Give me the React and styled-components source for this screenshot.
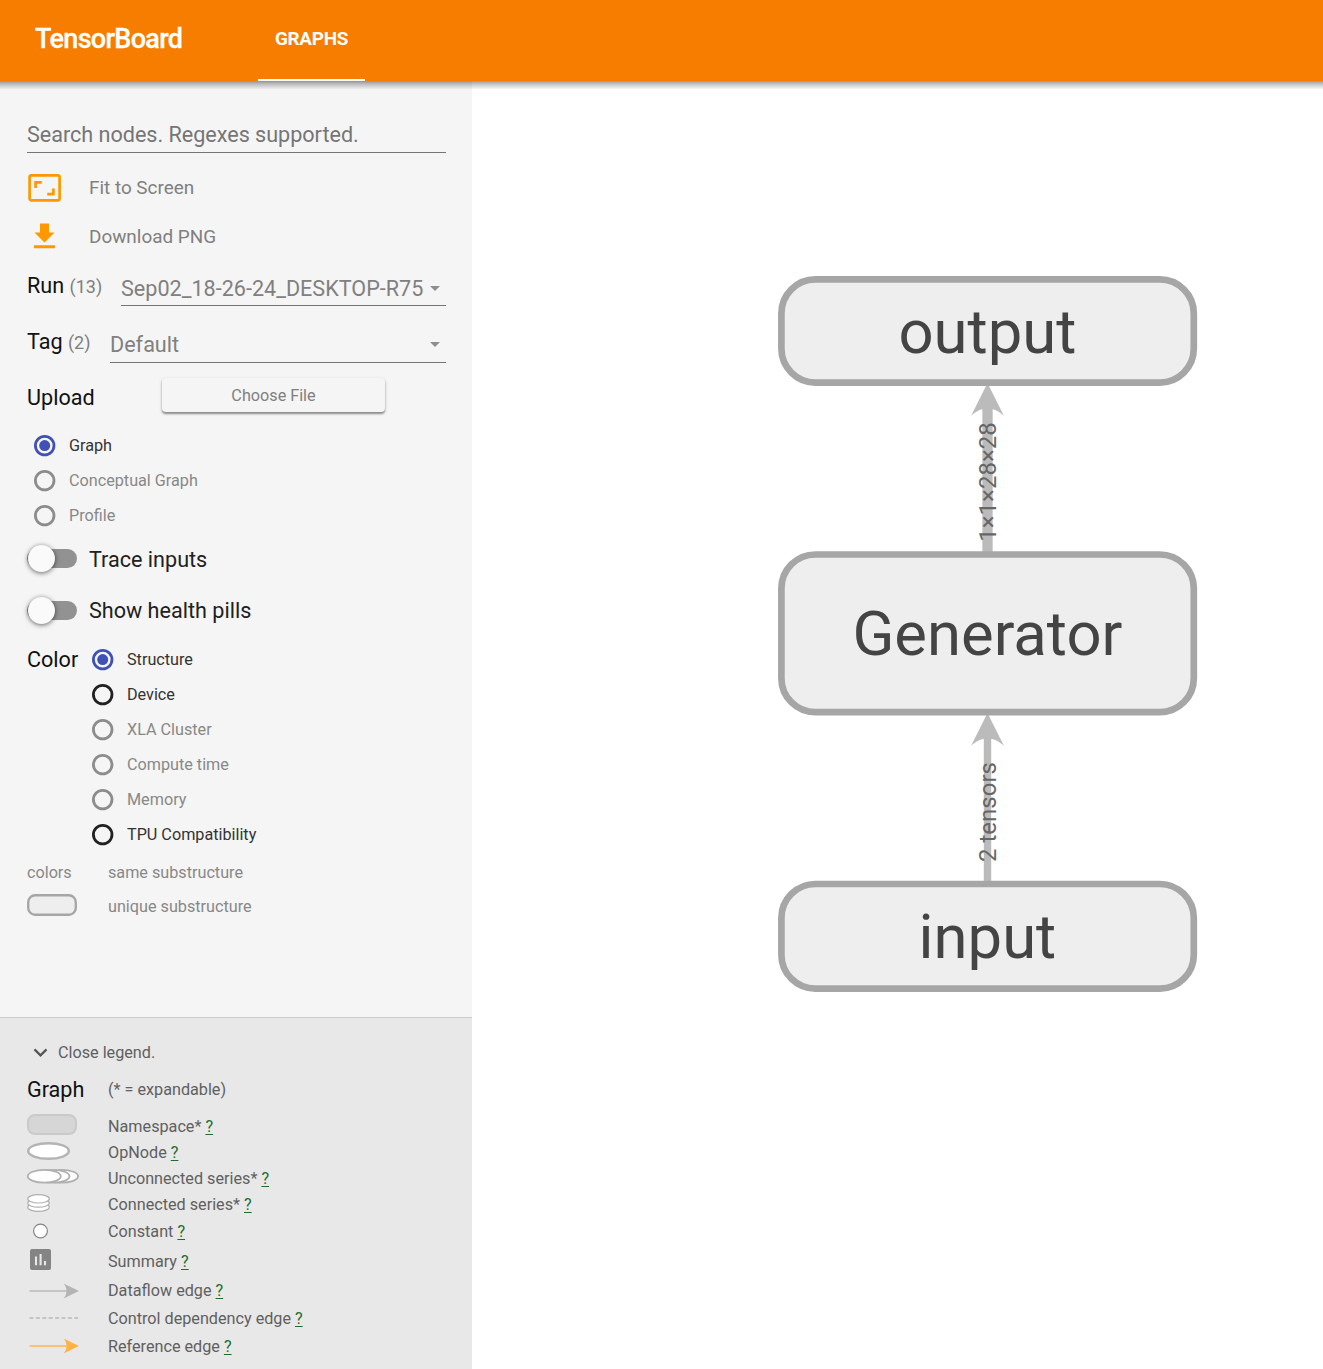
import React from 'react';
import styled, { createGlobalStyle } from 'styled-components';

const GlobalStyle = createGlobalStyle`
  * { box-sizing: border-box; }
  body { margin: 0; background: #fff; font-family: Roboto, "Liberation Sans", sans-serif; }
`;

const Page = styled.div`
  width: 1323px;
  height: 1369px;
  display: flex;
  flex-direction: column;
  overflow: hidden;
`;

const Header = styled.header`
  flex: none;
  position: relative;
  z-index: 1;
  height: 81px;
  display: flex;
  padding-left: 35px;
  color: #fff;
  background: #f77d00;
  &::after {
    content: '';
    position: absolute;
    top: 100%;
    left: 0;
    right: 0;
    height: 8px;
    background: linear-gradient(rgba(0, 0, 0, 0.4), rgba(0, 0, 0, 0.24) 35%, rgba(0, 0, 0, 0.03));
  }
`;

const Brand = styled.h1`
  width: 223px;
  margin: 0;
  font-size: 27px;
  font-weight: 500;
  line-height: 78px;
  letter-spacing: -0.68px;
  -webkit-text-stroke: 0.3px #fff;
`;

const Tab = styled.div`
  width: 107px;
  height: 81px;
  border-bottom: 2px solid #fff;
  text-align: center;
  font-size: 18.9px;
  font-weight: 700;
  line-height: 77px;
  letter-spacing: -0.3px;
`;

const Body = styled.div`
  flex: 1;
  display: flex;
  min-height: 0;
`;

const Sidebar = styled.aside`
  width: 472px;
  display: flex;
  flex-direction: column;
  background: #f5f5f5;
`;

const Controls = styled.div`
  flex: 1;
  padding: 35px 26px 0 27px;
`;

const SearchField = styled.div`
  height: 37px;
  margin-bottom: 10px;
  border-bottom: 1px solid #757575;
  color: #757575;
  font-size: 21.6px;
  line-height: 37px;
  letter-spacing: -0.02px;
`;

const ActionRow = styled.div`
  height: 49px;
  display: flex;
  align-items: center;
  color: #808080;
  font-size: 18.9px;
`;

const ActionIcon = styled.span`
  width: 62px;
  height: 35px;
  svg { display: block; }
`;

const SelectRow = styled.div`
  height: ${(p) => p.$height}px;
  display: flex;
  align-items: flex-end;
`;

const Title = styled.span`
  flex: none;
  width: ${(p) => (p.$width ? `${p.$width}px` : 'auto')};
  color: #111;
  font-size: 21.6px;
  line-height: 30px;
  padding-bottom: ${(p) => p.$lift || 0}px;
`;

const Count = styled.span`
  color: #808080;
  font-size: 18px;
`;

const Select = styled.div`
  flex: 1;
  height: ${(p) => p.$height || 35}px;
  display: flex;
  justify-content: space-between;
  align-items: center;
  padding-right: 6px;
  padding-bottom: ${(p) => p.$lift || 0}px;
  border-bottom: 1px solid #757575;
  color: #808080;
  font-size: 21.6px;
  white-space: nowrap;
`;

const Caret = styled.span`
  border: 5px solid transparent;
  border-top-color: #8e8e8e;
  border-bottom: 0;
`;

const UploadRow = styled.div`
  height: 65px;
  display: flex;
  align-items: flex-start;
  padding-top: 15px;
  ${Title} { margin-top: 5px; }
`;

const FileButton = styled.button`
  width: 223px;
  height: 34px;
  padding: 0;
  border: 0;
  border-radius: 4px;
  background: #f5f5f5;
  box-shadow: 0 2px 2px rgba(0, 0, 0, 0.38), 0 1px 4px rgba(0, 0, 0, 0.12);
  color: #808080;
  font: 16.2px Roboto, sans-serif;
`;

const RadioGroup = styled.div`
  display: flex;
  flex-direction: column;
  padding-left: ${(p) => p.$indent || 0}px;
`;

const RadioRow = styled.label`
  height: 35px;
  display: flex;
  align-items: center;
  gap: 13.4px;
  color: ${(p) => (p.$muted ? '#888' : '#333')};
  font-size: 16.2px;
`;

const Ring = styled.svg`
  width: 21.6px;
  height: 22px;
  flex: none;
  overflow: visible;
`;

const ToggleRow = styled.label`
  height: ${(p) => p.$height}px;
  display: flex;
  align-items: center;
  gap: 12px;
  color: #212121;
  font-size: 21.6px;
`;

const Track = styled.span`
  width: 50px;
  height: 19px;
  display: flex;
  align-items: center;
  margin-top: -1px;
  border-radius: 10px;
  background: #929292;
`;

const Knob = styled.span`
  width: 27px;
  height: 27px;
  margin-left: 1px;
  border-radius: 50%;
  background: #fafafa;
  box-shadow: 0 1px 5px rgba(0, 0, 0, 0.6);
`;

const ColorSection = styled.div`
  display: flex;
  padding-top: 6px;
  ${Title} { line-height: 35px; }
`;

const KeyRow = styled.div`
  height: ${(p) => p.$height}px;
  display: flex;
  align-items: center;
  color: ${(p) => p.$color || '#606060'};
  font-size: 16.2px;
  svg { display: block; overflow: visible; }
  a { color: #1b6e2e; text-decoration: underline; text-underline-offset: 2px; text-decoration-thickness: 1px; }
`;

const KeySymbol = styled.span`
  width: 81px;
  flex: none;
`;

const SymbolLift = styled.span`
  display: block;
  padding-bottom: ${(p) => p.$by}px;
`;

const Legend = styled.section`
  height: 352px;
  padding: 15px 0 0 27px;
  border-top: 1px solid #ccc;
  background: #e8e8e8;
`;

const LegendToggle = styled.div`
  height: 38px;
  display: flex;
  align-items: center;
  gap: 10px;
  padding-left: 6px;
  color: #606060;
  font-size: 16.2px;
`;

const LegendHeading = styled(KeyRow)`
  height: 36px;
  margin-bottom: 6px;
  ${Title} { display: block; padding-top: 2px; }
`;

const Canvas = styled.main`
  flex: 1;
  background: #fff;
  svg { display: block; }
`;

const NodeBox = styled.rect`
  fill: #eee;
  stroke: #a6a6a6;
  stroke-width: 6.7px;
`;

const NodeLabel = styled.text`
  fill: #444;
  font-size: 61.6px;
  text-anchor: middle;
`;

const EdgeLabel = styled.text`
  fill: #666;
  font-size: 24px;
  text-anchor: middle;
`;

function Radio({ on, muted, children }) {
  const color = on ? '#3f51b5' : muted ? '#8c8c8c' : '#212121';
  return (
    <RadioRow $muted={muted}>
      <Ring viewBox="0 0 21.6 22">
        <circle cx="10.7" cy="10.6" r="9.3" fill="none" stroke={color} strokeWidth="2.8" />
        {on && <circle cx="10.7" cy="10.6" r="5.5" fill={color} />}
      </Ring>
      {children}
    </RadioRow>
  );
}

function Toggle({ height, children }) {
  return (
    <ToggleRow $height={height}>
      <Track><Knob /></Track>
      {children}
    </ToggleRow>
  );
}

const symbols = {
  namespace: (
    <svg width="50" height="21"><rect x="1" y="1" width="48" height="19" rx="7" fill="#d6d6d6" stroke="#cacaca" strokeWidth="2" /></svg>
  ),
  op: (
    <svg width="43" height="18"><ellipse cx="21.5" cy="9" rx="20.3" ry="7.8" fill="#fff" stroke="#b4b4b4" strokeWidth="2.4" /></svg>
  ),
  unconnected: (
    <svg width="52" height="15" fill="#fff" stroke="#b0b0b0" strokeWidth="1.8">
      <ellipse cx="34.6" cy="7.3" rx="16.5" ry="6.4" />
      <ellipse cx="26" cy="7.3" rx="16.5" ry="6.4" />
      <ellipse cx="17.3" cy="7.3" rx="16.5" ry="6.4" />
    </svg>
  ),
  connected: (
    <svg width="23" height="18" fill="#fff" stroke="#b0b0b0" strokeWidth="1.2">
      <ellipse cx="11.5" cy="13.2" rx="10.8" ry="4.2" />
      <ellipse cx="11.5" cy="9" rx="10.8" ry="4.2" />
      <ellipse cx="11.5" cy="4.8" rx="10.8" ry="4.2" />
    </svg>
  ),
  constant: (
    <svg width="27" height="16"><circle cx="13.5" cy="8" r="6.9" fill="#fff" stroke="#848484" strokeWidth="1.2" /></svg>
  ),
  summary: (
    <svg width="27" height="21">
      <rect x="3" y="0" width="21" height="21" rx="2" fill="#848484" />
      <path d="M9 7.5V16.3M13.6 5V16.3M18 12V16.3" stroke="#e8e8e8" strokeWidth="2.1" />
    </svg>
  ),
  dataflow: (
    <svg width="52" height="16"><path d="M2.5 8H42" stroke="#b8b8b8" strokeWidth="1.4" /><path d="M36.5 .5L52 8L36.5 15.5C40.5 11 40.5 5 36.5 .5Z" fill="#b4b4b4" /></svg>
  ),
  control: (
    <svg width="52" height="4"><path d="M2.5 2H51" stroke="#b8b8b8" strokeWidth="1.4" strokeDasharray="4 2.4" /></svg>
  ),
  reference: (
    <svg width="52" height="16"><path d="M2.5 8H42" stroke="#ffb74d" strokeWidth="1.5" /><path d="M36.5 .5L52 8L36.5 15.5C40.5 11 40.5 5 36.5 .5Z" fill="#ffb347" /></svg>
  ),
};

const legendItems = [
  ['namespace', 'Namespace*', 26, 3],
  ['op', 'OpNode', 26, 3],
  ['unconnected', 'Unconnected series*', 26, 3],
  ['connected', 'Connected series*', 26, 3],
  ['constant', 'Constant', 28, 0],
  ['summary', 'Summary', 32, 3],
  ['dataflow', 'Dataflow edge', 27, 0],
  ['control', 'Control dependency edge', 28, 0],
  ['reference', 'Reference edge', 28, 0],
];

const nodes = [
  { name: 'output', top: 279.4, height: 103.2, baseline: 353 },
  { name: 'Generator', top: 554.5, height: 157.7, baseline: 655 },
  { name: 'input', top: 884, height: 104.7, baseline: 958 },
];

const edges = [
  { label: '1×1×28×28', from: 551, tip: 383, width: 10.3, middle: 482 },
  { label: '2 tensors', from: 881, tip: 713, width: 7.4, middle: 812 },
];

function GraphScene() {
  return (
    <svg width="851" height="1288" viewBox="472 81 851 1288">
      {edges.map((e) => (
        <g key={e.label}>
          <path d={`M987.5 ${e.from + 2}V${e.tip + 22}`} stroke="#bbb" strokeWidth={e.width} />
          <path d={`M971 ${e.tip + 33}L987.5 ${e.tip}L1004 ${e.tip + 33}C994.1 ${e.tip + 23.1} 980.9 ${e.tip + 23.1} 971 ${e.tip + 33}Z`} fill="#bbb" />
          <EdgeLabel transform={`translate(996.2 ${e.middle}) rotate(-90)`}>{e.label}</EdgeLabel>
        </g>
      ))}
      {nodes.map((n) => (
        <g key={n.name}>
          <NodeBox x="781.4" y={n.top} width="412.4" height={n.height} rx="34" />
          <NodeLabel x="987.4" y={n.baseline}>{n.name}</NodeLabel>
        </g>
      ))}
    </svg>
  );
}

export default function App() {
  return (
    <Page>
      <GlobalStyle />
      <Header>
        <Brand>TensorBoard</Brand>
        <Tab>GRAPHS</Tab>
      </Header>
      <Body>
        <Sidebar>
          <Controls>
            <SearchField>Search nodes. Regexes supported.</SearchField>
            <ActionRow>
              <ActionIcon>
                <svg width="35" height="35" fill="none" stroke="#ff9800">
                  <rect x="2.6" y="5.4" width="30" height="25" rx="1.8" strokeWidth="2.7" />
                  <path d="M8.6 18V12.4H14.8M26.4 18.5V24.1H20.2" strokeWidth="2.7" />
                </svg>
              </ActionIcon>
              Fit to Screen
            </ActionRow>
            <ActionRow>
              <ActionIcon>
                <svg width="35" height="35" fill="#ff9800">
                  <path d="M13 4.5H22V13.5H27.5L17.5 23.5L7.5 13.5H13ZM7 26.3H28V29.3H7Z" />
                </svg>
              </ActionIcon>
              Download PNG
            </ActionRow>
            <SelectRow $height={45}>
              <Title $width={94} $lift={4}>Run <Count>(13)</Count></Title>
              <Select>Sep02_18-26-24_DESKTOP-R75<Caret /></Select>
            </SelectRow>
            <SelectRow $height={57}>
              <Title $width={83} $lift={5}>Tag <Count>(2)</Count></Title>
              <Select $lift={2}>Default<Caret /></Select>
            </SelectRow>
            <UploadRow>
              <Title $width={135}>Upload</Title>
              <FileButton>Choose File</FileButton>
            </UploadRow>
            <RadioGroup $indent={7}>
              <Radio on>Graph</Radio>
              <Radio muted>Conceptual Graph</Radio>
              <Radio muted>Profile</Radio>
            </RadioGroup>
            <Toggle height={52}>Trace inputs</Toggle>
            <Toggle height={51}>Show health pills</Toggle>
            <ColorSection>
              <Title $width={65}>Color</Title>
              <RadioGroup>
                <Radio on>Structure</Radio>
                <Radio>Device</Radio>
                <Radio muted>XLA Cluster</Radio>
                <Radio muted>Compute time</Radio>
                <Radio muted>Memory</Radio>
                <Radio>TPU Compatibility</Radio>
              </RadioGroup>
            </ColorSection>
            <KeyRow $height={40} $color="#888"><KeySymbol>colors</KeySymbol>same substructure</KeyRow>
            <KeyRow $height={28} $color="#888">
              <KeySymbol>
                <svg width="50" height="24"><rect x="1.2" y="1.2" width="47.6" height="19.6" rx="7" fill="#eee" stroke="#a6a6a6" strokeWidth="2.4" /></svg>
              </KeySymbol>
              unique substructure
            </KeyRow>
          </Controls>
          <Legend>
            <LegendToggle>
              <svg width="15" height="10" fill="none" stroke="#555" strokeWidth="2.2"><path d="M1.5 2.4L7.5 8.4L13.5 2.4" /></svg>
              Close legend.
            </LegendToggle>
            <LegendHeading>
              <KeySymbol><Title>Graph</Title></KeySymbol>
              (* = expandable)
            </LegendHeading>
            {legendItems.map(([kind, text, height, lift]) => (
              <KeyRow key={kind} $height={height}>
                <KeySymbol><SymbolLift $by={lift}>{symbols[kind]}</SymbolLift></KeySymbol>
                <span>{text} <a>?</a></span>
              </KeyRow>
            ))}
          </Legend>
        </Sidebar>
        <Canvas><GraphScene /></Canvas>
      </Body>
    </Page>
  );
}
